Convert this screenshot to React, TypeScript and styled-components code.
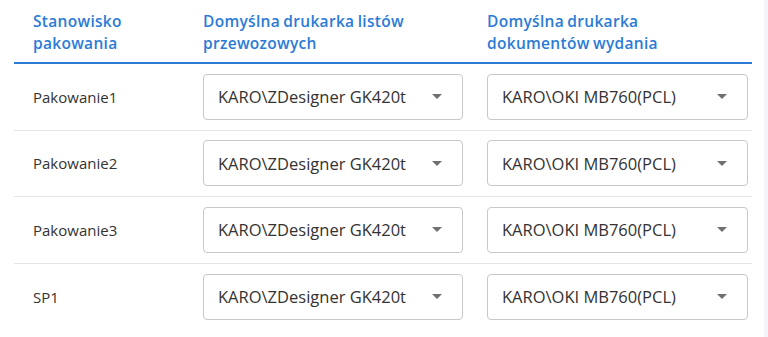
import React from "react";
import styled, { createGlobalStyle } from "styled-components";

const GlobalStyle = createGlobalStyle`
  body {
    margin: 0;
    background: #ffffff;
    font-family: "Open Sans", "Liberation Sans", sans-serif;
  }
`;

const Page = styled.div`
  display: flex;
  width: 768px;
  height: 337px;
  overflow: hidden;
`;

const Content = styled.div`
  flex: 1;
  padding: 0 12px 0 14px;
`;

const ScrollStrip = styled.div`
  width: 4px;
  background: #f3f5f8;
`;

const Grid = styled.div`
  display: grid;
  grid-template-columns: 189px 284px 265px;
`;

const HeadCell = styled.div<{ $first?: boolean }>`
  padding: ${(p) => (p.$first ? "10px 0 8px 19px" : "10px 0 8px 0")};
  color: #2b7bd6;
  font-weight: 600;
  font-size: 15.5px;
  line-height: 22px;
  letter-spacing: 0.3px;
  word-spacing: -1px;
  border-bottom: 2px solid #2b7bd6;
`;

const Cell = styled.div<{ $first?: boolean; $last?: boolean }>`
  display: flex;
  align-items: center;
  height: 65.6px;
  padding-left: ${(p) => (p.$first ? "19px" : "0")};
  border-bottom: ${(p) => (p.$last ? "none" : "1px solid #e6e6e6")};
  color: #333333;
  font-size: 15px;
`;

const Select = styled.div<{ $width: number }>`
  box-sizing: border-box;
  width: ${(p) => p.$width}px;
  height: 46px;
  display: flex;
  align-items: center;
  justify-content: space-between;
  padding: 0 20px 0 14px;
  border: 1px solid #c8c8c8;
  border-radius: 4px;
  color: #333333;
  font-size: 16.5px;
`;

const Arrow = styled.span`
  width: 0;
  height: 0;
  border-left: 5px solid transparent;
  border-right: 5px solid transparent;
  border-top: 5px solid #707070;
`;

const rows = ["Pakowanie1", "Pakowanie2", "Pakowanie3", "SP1"];

export default function App() {
  return (
    <Page>
      <GlobalStyle />
      <Content>
        <Grid>
          <HeadCell $first>
            Stanowisko
            <br />
            pakowania
          </HeadCell>
          <HeadCell>
            Domyślna drukarka listów
            <br />
            przewozowych
          </HeadCell>
          <HeadCell>
            Domyślna drukarka
            <br />
            dokumentów wydania
          </HeadCell>
          {rows.map((name, i) => {
            const last = i === rows.length - 1;
            return (
              <React.Fragment key={name}>
                <Cell $first $last={last}>
                  {name}
                </Cell>
                <Cell $last={last}>
                  <Select $width={260}>
                    KARO\ZDesigner GK420t
                    <Arrow />
                  </Select>
                </Cell>
                <Cell $last={last}>
                  <Select $width={261}>
                    KARO\OKI MB760(PCL)
                    <Arrow />
                  </Select>
                </Cell>
              </React.Fragment>
            );
          })}
        </Grid>
      </Content>
      <ScrollStrip />
    </Page>
  );
}
